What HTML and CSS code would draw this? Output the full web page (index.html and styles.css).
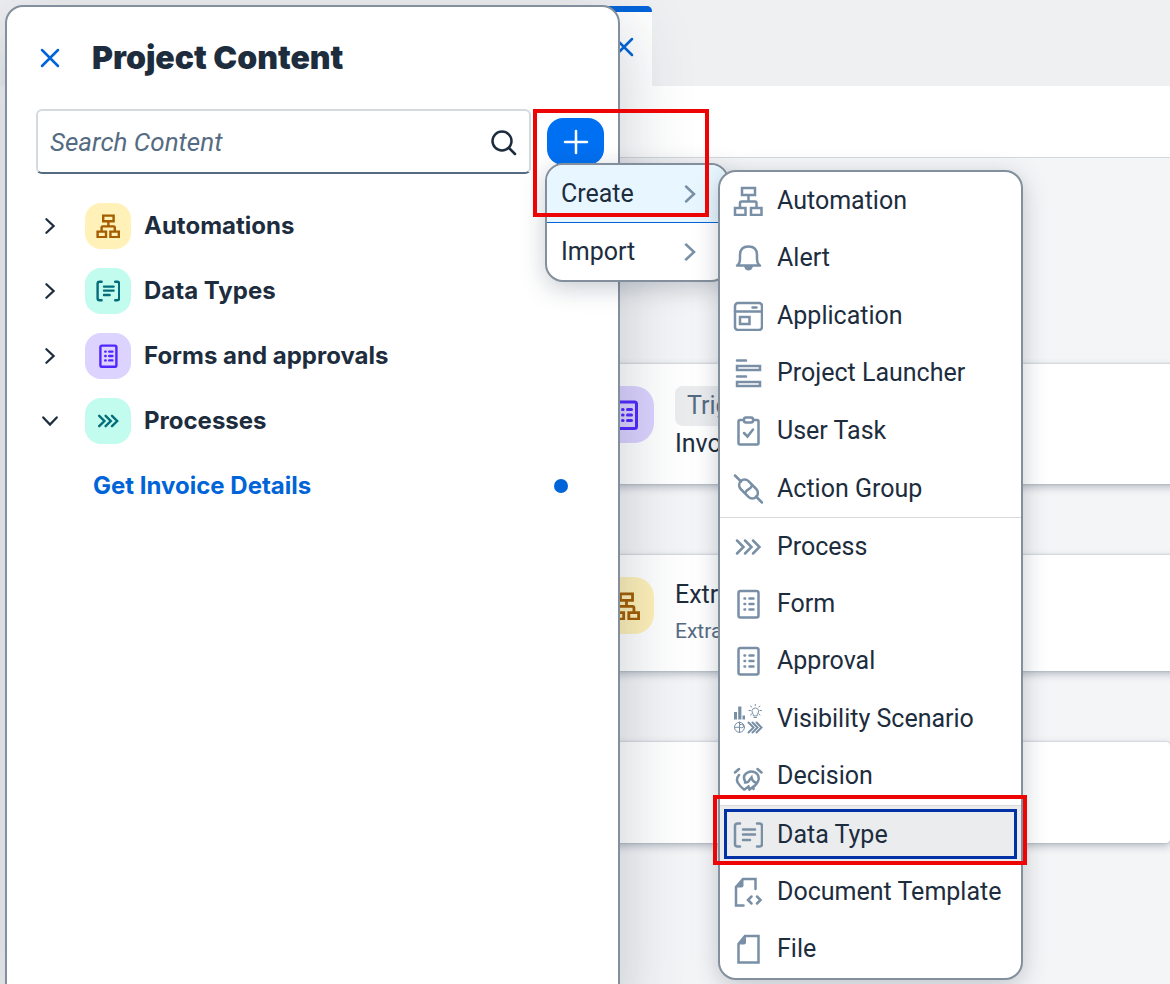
FILE: index.html
```html
<!DOCTYPE html>
<html lang="en">
<head>
<meta charset="utf-8">
<title>Project Content</title>
<link rel="stylesheet" href="styles.css">
</head>
<body>
<svg class="sprite" aria-hidden="true">
  <symbol id="i-automation" viewBox="0 0 30 30"><path d="M9 2h13v7H9zM2 22h10.500v7H2zM18 22h10.500v7H18zM15.500 9v6M7 22v-5q0-1.500 1.500-1.500h13.500q1.500 0 1.500 1.500v5"/></symbol>
  <symbol id="i-alert" viewBox="0 0 30 30"><path d="M4 22.500h23M5 22q2-2 2-6v-4q0-8.500 8.500-8.500T24 12v4q0 4 2 6"/><path class="solid" d="M11 23h9q-1 4.500-4.500 4.500T11 23z"/></symbol>
  <symbol id="i-application" viewBox="0 0 30 30"><rect x="2" y="2" width="27" height="27" rx="3"/><path d="M2 10.500h27M19.500 6.500h4M7 16h9.500v7H7z"/></symbol>
  <symbol id="i-launcher" viewBox="0 0 30 30"><path d="M4 2.500h9M4 18.500h9M4 8h23v4H4zM4 24h23v4H4z"/></symbol>
  <symbol id="i-task" viewBox="0 0 30 30"><path d="M10.500 4H7q-1.500 0-1.500 1.500v21.500q0 1.500 1.500 1.500h17q1.500 0 1.500-1.500V5.500q0-1.500-1.500-1.500h-3.500"/><rect x="11" y="1.500" width="9" height="5" rx="2"/><path d="M11 17l3.500 3.500 5.500-7"/></symbol>
  <symbol id="i-action" viewBox="0 0 30 30"><path d="M2 1.500l6 6M23 22.500l6 6"/><rect x="4.500" y="9.500" width="22" height="11" rx="5.500" transform="rotate(45 15.500 15)"/><path d="M19 11q-.5 3-3 4t-4 4"/></symbol>
  <symbol id="i-process" viewBox="0 0 30 30"><path d="M4 8.500l6.500 6.500-6.500 6.500M12 8.500l6.500 6.500-6.500 6.500M20 8.500l6.500 6.500-6.500 6.500"/></symbol>
  <symbol id="i-form" viewBox="0 0 30 30"><rect x="5.500" y="2" width="20" height="26.500" rx="2"/><path d="M11.500 9.500h.6M16.500 9.500h4M11.500 15h.6M16.500 15h4M11.500 20.500h.6M16.500 20.500h4"/></symbol>
  <symbol id="i-visibility" viewBox="0 0 30 30"><path class="solid" d="M1 8h3v7.500H1zM5.200 2.500h3.200v13H5.200zM9.500 11.500h2.500v4H9.500z"/><g class="thin"><path d="M20.500 11.500q0-1-1-2.500-1.500-2.500.5-4.200 2.300-1.800 4.600 0 2 1.700.5 4.200-1 1.500-1 2.500zM21 13.500h2.500M22.300 0v1.500M16 6.500h1.500M27 6.500h1.500M17.500 2l1.200 1M27 2l-1.200 1M17.500 11l1.200-1M27 11l-1.200-1"/><circle cx="6.500" cy="23.300" r="5"/><path d="M6.500 18v10.500M1.500 23.300h5M6.500 20.500h2q2.200 0 2.200 1.600t-2.200 1.600h-2"/></g><path class="mid" d="M15.500 18.500l5 5-5 5M19.500 18.500l5 5-5 5M23.500 18.500l5 5-5 5"/></symbol>
  <symbol id="i-decision" viewBox="0 0 30 30"><path d="M2 11.500l4-3.500M24.500 8l4 3.500"/><path d="M6 14Q2.500 18 5 22q2 3.500 6 6.500M12 20q-2.500-4.500 1-7.500 4-3 8.500-1.300 5 2.300 4 7.800-1 3.500-4 6M12 21.500q3 .5 4.500-2.500l2-2.500q.5 3.500 4 5M11.500 28.500l4-3 1 3 4-3v2.500"/></symbol>
  <symbol id="i-datatype" viewBox="0 0 30 30"><path d="M7 3.500H4.500Q2 3.500 2 6v18q0 2.500 2.500 2.500H7M24 3.500h2.500Q29 3.500 29 6v18q0 2.500-2.500 2.500H24M10 9.500h12M10 14.500h12M10 20h7"/></symbol>
  <symbol id="i-template" viewBox="0 0 30 30"><path d="M22.500 12V2H10L3 10v18.500h7.500M18.500 19.500L15 23l3.500 3.500M24 19.500l3.500 3.500-3.500 3.500"/><path class="solid" d="M3 10.500l7.500-8v6q0 2-2 2z"/></symbol>
  <symbol id="i-file" viewBox="0 0 30 30"><path d="M12 2h13.500v26.500h-20V10z"/><path class="solid" d="M5.500 10.500l7.500-8v6q0 2-2 2z"/></symbol>
  <symbol id="i-right" viewBox="0 0 20 20"><path d="M6 2.500l8 7.500-8 7.500"/></symbol>
  <symbol id="i-close" viewBox="0 0 20 20"><path d="M2 2l16 16M18 2L2 18"/></symbol>
  <symbol id="i-plus" viewBox="0 0 26 26"><path d="M13 2v22M2 13h22"/></symbol>
  <symbol id="i-search" viewBox="0 0 28 28"><circle cx="13" cy="13" r="9.500"/><path d="M20 20l6 6"/></symbol>
</svg>

<header class="tabs">
  <div class="tab"><button class="icon-btn" aria-label="Close tab"><svg class="icon i20"><use href="#i-close"/></svg></button></div>
</header>
<div class="toolbar"></div>
<main class="canvas">
  <article class="card">
    <span class="tile big violet"><svg class="icon i30"><use href="#i-form"/></svg></span>
    <div class="card-text"><span class="tag">Trigger</span><span class="name">Invoice</span></div>
  </article>
  <article class="card">
    <span class="tile big amber"><svg class="icon i28"><use href="#i-automation"/></svg></span>
    <div class="card-text"><span class="name">Extract</span><span class="sub">Extract</span></div>
  </article>
  <article class="card empty"></article>
</main>

<section class="panel" aria-label="Project Content">
  <div class="panel-head">
    <button class="icon-btn" aria-label="Close"><svg class="icon i20"><use href="#i-close"/></svg></button>
    <h1>Project Content</h1>
  </div>
  <div class="panel-tools">
    <label class="search">
      <input type="search" placeholder="Search Content" aria-label="Search Content">
      <svg class="icon i28"><use href="#i-search"/></svg>
    </label>
    <button class="add" aria-label="Add"><svg class="icon i26"><use href="#i-plus"/></svg></button>
  </div>
  <ul class="tree">
    <li><button class="node"><svg class="icon chev"><use href="#i-right"/></svg><span class="tile amber"><svg class="icon i24"><use href="#i-automation"/></svg></span>Automations</button></li>
    <li><button class="node"><svg class="icon chev"><use href="#i-right"/></svg><span class="tile teal"><svg class="icon i24"><use href="#i-datatype"/></svg></span>Data Types</button></li>
    <li><button class="node"><svg class="icon chev"><use href="#i-right"/></svg><span class="tile violet"><svg class="icon i24"><use href="#i-form"/></svg></span>Forms and approvals</button></li>
    <li><button class="node" aria-expanded="true"><svg class="icon chev open"><use href="#i-right"/></svg><span class="tile teal"><svg class="icon i24"><use href="#i-process"/></svg></span>Processes</button></li>
    <li class="leaf"><a href="#">Get Invoice Details</a><span class="dot"></span></li>
  </ul>
</section>

<div class="menu menu-main" role="menu">
  <button class="item active" role="menuitem">Create<svg class="icon i20"><use href="#i-right"/></svg></button>
  <button class="item" role="menuitem">Import<svg class="icon i20"><use href="#i-right"/></svg></button>
</div>

<div class="menu menu-create" role="menu">
  <button class="item" role="menuitem"><svg class="icon i30"><use href="#i-automation"/></svg>Automation</button>
  <button class="item" role="menuitem"><svg class="icon i30"><use href="#i-alert"/></svg>Alert</button>
  <button class="item" role="menuitem"><svg class="icon i30"><use href="#i-application"/></svg>Application</button>
  <button class="item" role="menuitem"><svg class="icon i30"><use href="#i-launcher"/></svg>Project Launcher</button>
  <button class="item" role="menuitem"><svg class="icon i30"><use href="#i-task"/></svg>User Task</button>
  <button class="item" role="menuitem"><svg class="icon i30"><use href="#i-action"/></svg>Action Group</button>
  <button class="item divided" role="menuitem"><svg class="icon i30"><use href="#i-process"/></svg>Process</button>
  <button class="item" role="menuitem"><svg class="icon i30"><use href="#i-form"/></svg>Form</button>
  <button class="item" role="menuitem"><svg class="icon i30"><use href="#i-form"/></svg>Approval</button>
  <button class="item" role="menuitem"><svg class="icon i30"><use href="#i-visibility"/></svg>Visibility Scenario</button>
  <button class="item" role="menuitem"><svg class="icon i30"><use href="#i-decision"/></svg>Decision</button>
  <button class="item divided focused" role="menuitem"><svg class="icon i30"><use href="#i-datatype"/></svg>Data Type</button>
  <button class="item" role="menuitem"><svg class="icon i30"><use href="#i-template"/></svg>Document Template</button>
  <button class="item" role="menuitem"><svg class="icon i30"><use href="#i-file"/></svg>File</button>
</div>

<div class="mark mark-create"></div>
<div class="mark mark-type"></div>
</body>
</html>
```
FILE: styles.css
```css
* { box-sizing: border-box; }
body {
  margin: 0;
  min-height: 100vh;
  display: flex;
  flex-direction: column;
  position: relative;
  overflow: hidden;
  background: #f4f5f7;
  color: #1d2d3e;
  font: 25px/36px Roboto, "Liberation Sans", sans-serif;
}
button { font: inherit; color: inherit; background: none; border: 0; padding: 0; text-align: left; }
.sprite { position: absolute; width: 0; height: 0; }
.icon { flex: none; display: block; fill: none; stroke: currentColor; stroke-width: 2; stroke-linecap: round; }
.solid { fill: currentColor; stroke: none; }
.thin { stroke-width: 1; }
.mid { stroke-width: 2; }
.i20 { width: 20px; height: 20px; stroke-width: 2.5; }
.i24 { width: 24px; height: 24px; stroke-width: 3; }
.i26 { width: 26px; height: 26px; stroke-width: 2.5; }
.i28 { width: 28px; height: 28px; stroke-width: 2.5; }
.i30 { width: 30px; height: 30px; stroke-width: 2.5; }
.icon-btn { color: #0064d9; }

.tabs { height: 86px; padding: 6px 0 0 24px; background: #eff0f2; }
.tab {
  width: 628px;
  height: 80px;
  padding: 0 18px 4px 0;
  display: flex;
  align-items: center;
  justify-content: flex-end;
  background: #fff;
  border-top: 6px solid #0064d9;
  border-top-right-radius: 5px;
}
.toolbar { height: 72px; margin-left: 24px; background: #fff; border-bottom: 1px solid #d5d9de; }
.canvas { padding: 206px 0 72px 576px; display: flex; flex-direction: column; gap: 71px; }
.card {
  display: flex;
  gap: 21px;
  padding: 22px 21px;
  margin-right: -24px;
  background: #fff;
  border-radius: 4px;
  box-shadow: 0 0 2px rgba(34, 53, 72, .3), 0 3px 8px rgba(34, 53, 72, .3);
}
.card.empty { min-height: 101px; margin-right: 0; }
.card-text { display: flex; flex-direction: column; align-items: flex-start; }
.tag { padding: 0 12px; line-height: 40px; border-radius: 8px; background: #eaecee; color: #556b82; }
.sub { font-size: 21px; line-height: 36px; color: #556b82; }

.tile { flex: none; width: 46px; height: 46px; border-radius: 16px; display: grid; place-items: center; }
.tile.big { width: 57px; height: 57px; border-radius: 20px; }
.amber { background: #fff1b8; color: #a45d00; }
.teal { background: #c2fcee; color: #046c7a; }
.violet { background: #dcd3ff; color: #5127ff; }
.big .icon { stroke-width: 3; }

.panel {
  position: absolute;
  top: 5px;
  left: 5px;
  bottom: -24px;
  width: 615px;
  padding: 21px 14px 0 29px;
  background: #fff;
  border: 2px solid #838f9c;
  border-radius: 18px;
  box-shadow: 0 20px 70px rgba(34, 53, 72, .25);
}
.panel-head { display: flex; align-items: center; gap: 32px; padding-left: 4px; height: 60px; }
h1 { margin: 0; font: 900 32px/40px Inter, sans-serif; }
.panel-tools { display: flex; align-items: center; gap: 16px; margin-top: 21px; }
.search {
  flex: 1;
  height: 65px;
  display: flex;
  align-items: center;
  padding: 0 12px;
  border: 2px solid #d5dadf;
  border-bottom-color: #556b82;
  border-radius: 6px;
}
.search input { flex: 1; min-width: 0; padding: 0; border: 0; background: none; font: inherit; font-size: 26px; color: inherit; }
.search input::placeholder { color: #556b82; opacity: 1; font-style: italic; }
.add { width: 57px; height: 47px; border-radius: 16px; background: #0070f2; color: #fff; display: grid; place-items: center; }
.tree { list-style: none; margin: 19px 0 0; padding: 0; font: 700 24px/36px Inter, sans-serif; }
.node { width: 100%; height: 65px; padding-left: 5px; display: flex; align-items: center; }
.node .tile { margin: 0 13px 0 26px; }
.chev { width: 18px; height: 18px; stroke-width: 2.5; }
.chev.open { transform: rotate(90deg); }
.leaf { height: 65px; display: flex; align-items: center; justify-content: space-between; padding: 0 36px 0 57px; }
.leaf a { color: #0064d9; text-decoration: none; }
.dot { width: 14px; height: 14px; border-radius: 50%; background: #0064d9; }

.menu {
  position: absolute;
  overflow: hidden;
  background: #fff;
  border: 2px solid #838f9c;
  border-radius: 18px;
  box-shadow: 0 6px 24px rgba(34, 53, 72, .25);
}
.item { width: 100%; display: flex; align-items: center; }
.menu-main { left: 545px; top: 163px; width: 184px; }
.menu-main .item { height: 57px; padding: 0 27px 0 14px; justify-content: space-between; }
.menu-main .active { height: 58px; background: #e8f7ff; border-bottom: 1px solid #0064d9; }
.menu-main .icon { color: #788fa6; }
.menu-create { left: 718px; top: 170px; width: 305px; min-height: 810px; display: grid; grid-auto-rows: 1fr; }
.menu-create .item { gap: 14px; padding-left: 13px; }
.menu-create .icon { color: #788fa6; }
.menu-create .divided { border-top: 1px solid #d9d9d9; }
.menu-create .focused { background: #eaecee; outline: 3px solid #0032a5; outline-offset: -7px; }

.mark { position: absolute; border: 4px solid #ed0505; }
.mark-create { left: 533px; top: 109px; width: 176px; height: 108px; }
.mark-type { left: 713px; top: 795px; width: 314px; height: 70px; }
```
